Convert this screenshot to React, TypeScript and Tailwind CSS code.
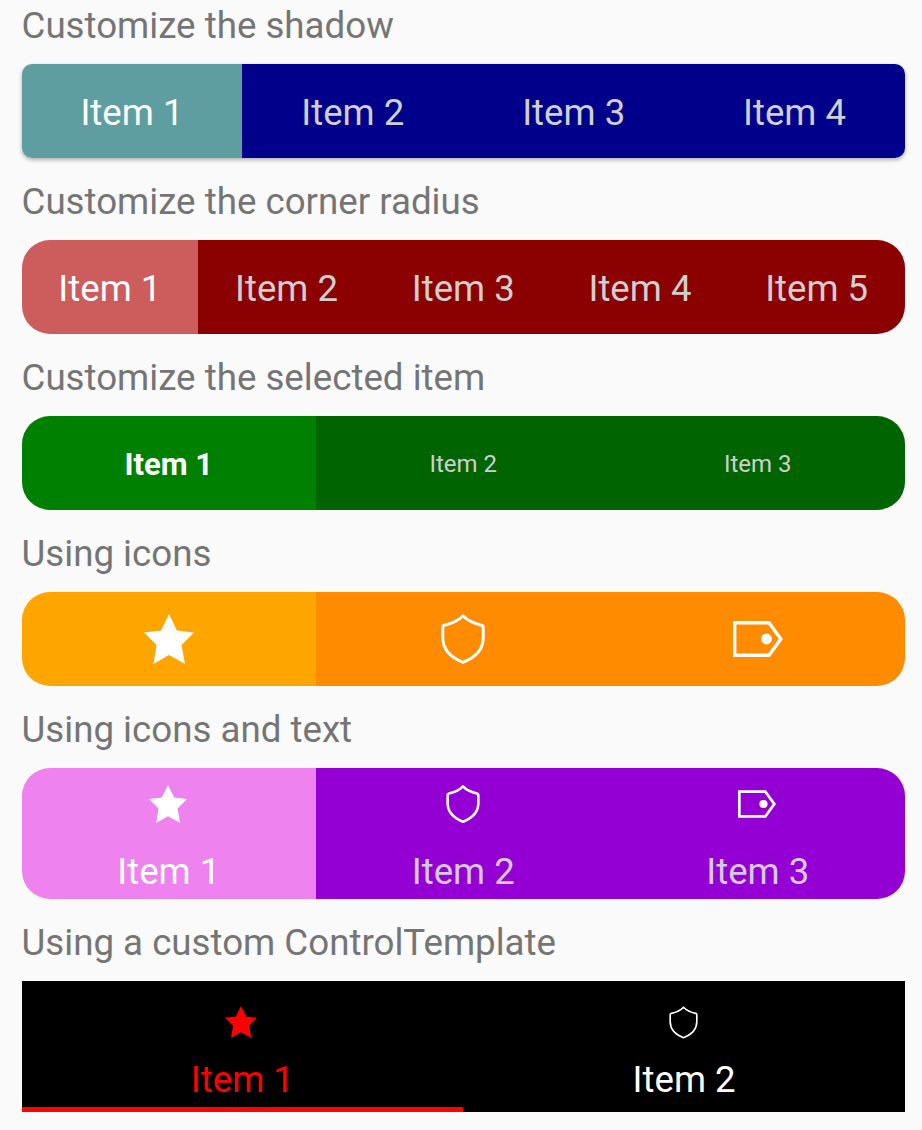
import React from "react";

function Star({ className }: { className: string }) {
  return (
    <svg viewBox="0 0 50 50" className={className} fill="currentColor">
      <path d="M25 0L33 16.500L50 18.500L37.500 31L41 50L25 41L9.500 50L12.500 31L0 18.500L17 16.500Z" />
    </svg>
  );
}

function Shield({ className, sw = 3 }: { className: string; sw?: number }) {
  return (
    <svg viewBox="0 0 44 50" className={className} fill="none" stroke="currentColor" strokeWidth={sw} strokeLinejoin="round">
      <path d="M22 1.800C18 6 11 9.500 3.500 11.200Q1.800 11.600 1.800 13.500V24C1.800 35.500 10 43.500 22 48.300C34 43.500 42.200 35.500 42.200 24V13.500Q42.200 11.600 40.500 11.200C33 9.500 26 6 22 1.800Z" />
    </svg>
  );
}

function Tag({ className, sw = 3 }: { className: string; sw?: number }) {
  return (
    <svg viewBox="0 0 50 36" className={className} fill="none">
      <path d="M1.700 1.700H36L47.800 18L36 34.300H1.700Z" stroke="currentColor" strokeWidth={sw} />
      <circle cx="33.500" cy="18" r="5.400" fill="currentColor" />
    </svg>
  );
}

function Label({ children, first }: { children: React.ReactNode; first?: boolean }) {
  return (
    <div className={`${first ? "pt-[1px]" : "mt-[19px]"} mb-[13px] text-[36.7px] leading-[50px] text-[#757575]`}>
      {children}
    </div>
  );
}

function TextBar({ items, on, off, shape }: { items: string[]; on: string; off: string; shape: string }) {
  return (
    <div className={`flex h-[94px] overflow-hidden text-[36.6px] ${shape}`}>
      {items.map((t, i) => (
        <div key={t} className={`flex flex-1 items-center justify-center pt-[5px] ${i === 0 ? `${on} text-white` : `${off} text-[#cfcfcf]`}`}>
          {t}
        </div>
      ))}
    </div>
  );
}

export default function App() {
  return (
    <div className="h-[1130px] overflow-hidden bg-[#fafafa] pl-[21.5px] pr-[17px] font-['Roboto',sans-serif]">
      <Label first>Customize the shadow</Label>
      <TextBar
        items={["Item 1", "Item 2", "Item 3", "Item 4"]}
        on="bg-[#5f9ea0]"
        off="bg-[#00008b]"
        shape="rounded-[10px] shadow-[0_2px_4px_rgba(0,0,0,0.3)]"
      />

      <Label>Customize the corner radius</Label>
      <TextBar
        items={["Item 1", "Item 2", "Item 3", "Item 4", "Item 5"]}
        on="bg-[#cd5c5c]"
        off="bg-[#8b0000]"
        shape="rounded-[28px]"
      />

      <Label>Customize the selected item</Label>
      <div className="flex h-[94px] overflow-hidden rounded-[28px]">
        <div className="flex flex-1 items-center justify-center bg-[#008000] pt-[5px] text-[31px] font-bold text-white">Item 1</div>
        <div className="flex flex-1 items-center justify-center bg-[#006400] pt-[1px] text-[24px] text-[#cfcfcf]">Item 2</div>
        <div className="flex flex-1 items-center justify-center bg-[#006400] pt-[1px] text-[24px] text-[#cfcfcf]">Item 3</div>
      </div>

      <Label>Using icons</Label>
      <div className="flex h-[94px] overflow-hidden rounded-[28px] text-white">
        <div className="flex flex-1 items-center justify-center bg-[#ffa500]">
          <Star className="h-[50px] w-[50px]" />
        </div>
        <div className="flex flex-1 items-center justify-center bg-[#ff8c00]">
          <Shield className="h-[50px] w-[44px]" />
        </div>
        <div className="flex flex-1 items-center justify-center bg-[#ff8c00]">
          <Tag className="h-[36px] w-[50px]" sw={3.400} />
        </div>
      </div>

      <Label>Using icons and text</Label>
      <div className="flex h-[131px] overflow-hidden rounded-[28px] text-[36.6px] leading-[50px]">
        {[
          { t: "Item 1", icon: <Star className="-ml-[1px] h-[38px] w-[38px]" /> },
          { t: "Item 2", icon: <Shield className="-ml-[1px] h-[38px] w-[34px]" sw={3.400} /> },
          { t: "Item 3", icon: <Tag className="-ml-[2px] h-[28px] w-[38px]" sw={3.600} /> },
        ].map((x, i) => (
          <div key={x.t} className={`flex flex-1 flex-col items-center pt-[17px] ${i === 0 ? "bg-[#ee82ee] text-white" : "bg-[#9400d3] text-[#d4cadb]"}`}>
            <div className="flex h-[38px] items-center text-white">{x.icon}</div>
            <div className="mt-[24px]">{x.t}</div>
          </div>
        ))}
      </div>

      <Label>Using a custom ControlTemplate</Label>
      <div className="flex h-[131px] bg-black text-[36.6px] leading-[50px]">
        <div className="flex flex-1 flex-col items-center border-b-[5px] border-[#ff0000] pt-[25px] text-[#ff0000]">
          <div className="flex h-[32px] items-center"><Star className="-ml-[3px] h-[32px] w-[32px]" /></div>
          <div className="mt-[17px]">Item 1</div>
        </div>
        <div className="flex flex-1 flex-col items-center pt-[25px] text-white">
          <div className="flex h-[32px] items-center"><Shield className="-ml-[2px] h-[33px] w-[29px]" sw={2.500} /></div>
          <div className="mt-[17px]">Item 2</div>
        </div>
      </div>
    </div>
  );
}
